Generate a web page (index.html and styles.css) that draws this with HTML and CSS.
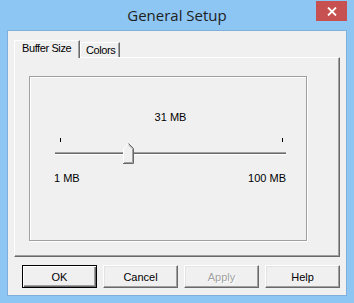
FILE: index.html
```html
<!DOCTYPE html>
<html>
<head>
<meta charset="utf-8">
<title>General Setup</title>
<link rel="stylesheet" href="styles.css">
</head>
<body>
<div class="window">
  <div class="titlebar">
    <span></span>
    <span class="title">General Setup</span>
    <button class="close" aria-label="Close">
      <svg width="10" height="9" viewBox="0 0 10 9"><path d="M1 0.5 L9 8.5 M9 0.5 L1 8.5" stroke="#fff" stroke-width="1.8" fill="none"/></svg>
    </button>
  </div>
  <div class="client">
    <div class="tabs">
      <div class="tabstrip">
        <div class="tab active">Buffer Size</div>
        <div class="tab">Colors</div>
      </div>
      <div class="pane">
        <div class="group">
          <div class="value">31 MB</div>
          <div class="slider">
            <div class="ticks"><i></i><i></i></div>
            <div class="channel"></div>
            <svg class="thumb" style="left:68px" width="11" height="21" viewBox="0 0 11 21">
              <polygon points="0,5 5,0 6,0 11,5 11,21 0,21" fill="#f0f0f0"/>
              <path d="M0.5 20.5 V5.5 L5.5 0.5" stroke="#fff" fill="none"/>
              <path d="M5.5 0.5 L10.5 5.5 V20.5 H0" stroke="#696969" fill="none"/>
              <path d="M5.5 1.8 L9.5 5.8 V19.5 H1" stroke="#a0a0a0" fill="none"/>
            </svg>
          </div>
          <div class="limits"><span>1 MB</span><span>100 MB</span></div>
        </div>
      </div>
    </div>
    <div class="buttons">
      <button class="btn default">OK</button>
      <button class="btn">Cancel</button>
      <button class="btn" disabled>Apply</button>
      <button class="btn">Help</button>
    </div>
  </div>
</div>
</body>
</html>
```
FILE: styles.css
```css
html, body {
  margin: 0;
  padding: 0;
}
body {
  background: #8dc5f3;
  font-family: "Liberation Sans", Arial, sans-serif;
  font-size: 11px;
  color: #000;
}
.window {
  width: 354px;
  height: 303px;
  display: flex;
  flex-direction: column;
  overflow: hidden;
}
.titlebar {
  height: 30px;
  box-sizing: border-box;
  padding: 0 7px;
  display: grid;
  grid-template-columns: 1fr auto 1fr;
  align-items: start;
}
.title {
  font-family: "Open Sans", "Noto Sans", sans-serif;
  font-size: 15px;
  line-height: 30px;
  color: #1e1e1e;
}
.close {
  justify-self: end;
  width: 31px;
  height: 20px;
  margin-top: 1px;
  padding: 0;
  border: 0;
  background: #c75050;
  display: flex;
  align-items: center;
  justify-content: center;
}
.close svg { display: block; }
.client {
  margin: 0 7px;
  height: 266px;
  box-sizing: border-box;
  border: 1px solid #7fb0dc;
  background: #f0f0f0;
}
.tabs {
  margin: 9px 0 0 6px;
  width: 326px;
}
.tabstrip {
  display: flex;
  align-items: flex-end;
  height: 17px;
  position: relative;
  z-index: 1;
}
.tab {
  box-sizing: border-box;
  width: 40px;
  height: 15px;
  padding: 1px 0 0 5px;
  line-height: 13px;
  letter-spacing: -0.4px;
  border-style: solid;
  border-width: 1px 1px 0 1px;
  border-color: #fff #696969 transparent #fff;
  box-shadow: inset -1px 0 #a0a0a0;
  background: #f0f0f0;
  white-space: nowrap;
}
.tab.active {
  width: 66px;
  height: 18px;
  margin-bottom: -1px;
  padding: 1px 0 0 7px;
}
.pane {
  box-sizing: border-box;
  height: 200px;
  border-style: solid;
  border-width: 1px;
  border-color: #fff #696969 #696969 #fff;
  box-shadow: inset -1px -1px #a0a0a0;
  padding: 18px 0 0 14px;
}
.group {
  box-sizing: border-box;
  width: 278px;
  height: 165px;
  border: 1px solid #a0a0a0;
  box-shadow: inset 1px 1px #fff, 1px 1px #fff;
  padding-top: 34px;
}
.value {
  width: 231px;
  margin-left: 25px;
  text-align: center;
  line-height: 13px;
}
.slider {
  position: relative;
  width: 231px;
  height: 27px;
  margin: 14px 0 0 25px;
}
.ticks {
  display: flex;
  justify-content: space-between;
  height: 4px;
  padding: 0 3px 0 5px;
}
.ticks i {
  width: 1px;
  height: 4px;
  background: #000;
}
.channel {
  margin-top: 10px;
  height: 1px;
  background: #696969;
  border-top: 1px solid #a0a0a0;
  border-bottom: 1px solid #fff;
}
.thumb {
  position: absolute;
  top: 5px;
  display: block;
}
.limits {
  display: flex;
  justify-content: space-between;
  width: 232px;
  margin: 7px 0 0 24px;
  line-height: 13px;
}
.buttons {
  display: flex;
  gap: 6px;
  margin: 8px 0 0 14px;
}
.btn {
  box-sizing: border-box;
  width: 75px;
  height: 23px;
  padding: 0;
  font-family: "Liberation Sans", Arial, sans-serif;
  font-size: 11px;
  color: #000;
  background: #f0f0f0;
  border-style: solid;
  border-width: 1px;
  border-color: #fff #696969 #696969 #fff;
  box-shadow: inset -1px -1px #a0a0a0, inset 1px 1px #e3e3e3;
}
.btn.default {
  border: 1px solid #000;
  box-shadow: inset 1px 1px #fff, inset -1px -1px #696969, inset -2px -2px #a0a0a0;
}
.btn:disabled {
  color: #a0a0a0;
  text-shadow: 1px 1px #fff;
}
```
